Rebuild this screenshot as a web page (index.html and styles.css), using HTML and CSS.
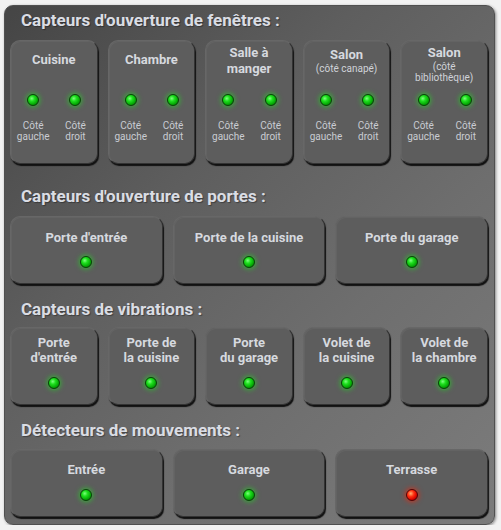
FILE: index.html
```html
<!DOCTYPE html>
<html lang="fr">
<head>
<meta charset="utf-8">
<link rel="stylesheet" href="styles.css">
</head>
<body>
<div class="panel">
  <section class="section first">
    <h2 class="title">Capteurs d'ouverture de fenêtres :</h2>
    <div class="grid five">
      <div class="card win">
        <div class="wtitle"><span class="name">Cuisine</span></div>
        <div class="pair">
          <div class="side"><span class="led green"></span><span class="lbl">Côté<br>gauche</span></div>
          <div class="side"><span class="led green"></span><span class="lbl">Côté<br>droit</span></div>
        </div>
      </div>
      <div class="card win">
        <div class="wtitle"><span class="name">Chambre</span></div>
        <div class="pair">
          <div class="side"><span class="led green"></span><span class="lbl">Côté<br>gauche</span></div>
          <div class="side"><span class="led green"></span><span class="lbl">Côté<br>droit</span></div>
        </div>
      </div>
      <div class="card win">
        <div class="wtitle"><span class="name">Salle à<br>manger</span></div>
        <div class="pair">
          <div class="side"><span class="led green"></span><span class="lbl">Côté<br>gauche</span></div>
          <div class="side"><span class="led green"></span><span class="lbl">Côté<br>droit</span></div>
        </div>
      </div>
      <div class="card win">
        <div class="wtitle"><span class="name">Salon</span><span class="sub">(côté canapé)</span></div>
        <div class="pair">
          <div class="side"><span class="led green"></span><span class="lbl">Côté<br>gauche</span></div>
          <div class="side"><span class="led green"></span><span class="lbl">Côté<br>droit</span></div>
        </div>
      </div>
      <div class="card win">
        <div class="wtitle"><span class="name">Salon</span><span class="sub">(côté<br>bibliothèque)</span></div>
        <div class="pair">
          <div class="side"><span class="led green"></span><span class="lbl">Côté<br>gauche</span></div>
          <div class="side"><span class="led green"></span><span class="lbl">Côté<br>droit</span></div>
        </div>
      </div>
    </div>
  </section>

  <section class="section second">
    <h2 class="title">Capteurs d'ouverture de portes :</h2>
    <div class="grid three">
      <div class="card door"><span class="name">Porte d'entrée</span><span class="led green"></span></div>
      <div class="card door"><span class="name">Porte de la cuisine</span><span class="led green"></span></div>
      <div class="card door"><span class="name">Porte du garage</span><span class="led green"></span></div>
    </div>
  </section>

  <section class="section third">
    <h2 class="title">Capteurs de vibrations :</h2>
    <div class="grid five">
      <div class="card vib"><span class="name">Porte<br>d'entrée</span><span class="led green"></span></div>
      <div class="card vib"><span class="name">Porte de<br>la cuisine</span><span class="led green"></span></div>
      <div class="card vib"><span class="name">Porte<br>du garage</span><span class="led green"></span></div>
      <div class="card vib"><span class="name">Volet de<br>la cuisine</span><span class="led green"></span></div>
      <div class="card vib"><span class="name">Volet de<br>la chambre</span><span class="led green"></span></div>
    </div>
  </section>

  <section class="section fourth">
    <h2 class="title">Détecteurs de mouvements :</h2>
    <div class="grid three">
      <div class="card motion"><span class="name">Entrée</span><span class="led green"></span></div>
      <div class="card motion"><span class="name">Garage</span><span class="led green"></span></div>
      <div class="card motion"><span class="name">Terrasse</span><span class="led red"></span></div>
    </div>
  </section>
</div>
</body>
</html>
```

FILE: styles.css
```css
html, body {
  margin: 0;
  padding: 0;
  background: #f2f2f2;
}
body {
  font-family: Roboto, "Liberation Sans", Arial, sans-serif;
}
.panel {
  box-sizing: border-box;
  width: 491px;
  margin: 5px 0 0 4px;
  padding: 4px 6px 7px 5px;
  border: 1px solid #505050;
  border-radius: 9px;
  background: linear-gradient(135deg, #454545 0%, #5e5e5e 35%, #6e6e6e 65%, #7c7c7c 100%);
  box-shadow: 1px 1px 3px rgba(0, 0, 0, 0.45);
}
.section.second { margin-top: 22px; }
.section.third { margin-top: 15px; }
.section.fourth { margin-top: 15px; }
.title {
  margin: 0 0 10px 11px;
  font-size: 17px;
  line-height: 20px;
  font-weight: 700;
  color: #dadde4;
  text-shadow: 1px 1px 1px rgba(0, 0, 0, 0.35);
}
.third .title { margin-bottom: 8px; }
.fourth .title { margin-bottom: 9px; }
.grid {
  display: grid;
  column-gap: 10px;
}
.grid.five { grid-template-columns: repeat(5, 1fr); }
.grid.three { grid-template-columns: repeat(3, 1fr); }
.card {
  box-sizing: border-box;
  background: #5d5d5d;
  border-radius: 10px;
  border: 1px solid #676767;
  border-right-color: #333;
  border-bottom-color: #333;
  box-shadow: 1px 2px 1px #111, inset 1px 1px 0 rgba(255, 255, 255, 0.04);
  color: #d6d9df;
  text-align: center;
  display: flex;
  flex-direction: column;
  align-items: center;
}
.name {
  font-weight: 700;
  font-size: 13px;
  line-height: 16px;
}
.card.win {
  height: 124px;
}
.wtitle {
  margin-top: 4px;
  height: 30px;
  display: flex;
  flex-direction: column;
  justify-content: safe center;
  align-items: center;
}
.sub {
  display: block;
  font-size: 10px;
  line-height: 11px;
  color: #cfd2d8;
}
.pair {
  align-self: stretch;
  display: grid;
  grid-template-columns: 1fr 1fr;
  padding: 0 0 0 1px;
  margin-top: 19px;
}
.side {
  display: flex;
  flex-direction: column;
  align-items: center;
}
.lbl {
  margin-top: 14px;
  font-size: 10px;
  line-height: 11px;
  color: #c9ccd2;
}
.led {
  display: block;
  box-sizing: border-box;
  width: 12px;
  height: 12px;
  border-radius: 50%;
}
.led.green {
  background: radial-gradient(circle at 38% 35%, #7dff7d 0%, #1ee01e 30%, #06a806 65%, #035a03 100%);
  border: 1px solid #034a03;
  box-shadow: 0 0 5px 1px rgba(30, 230, 30, 0.6);
}
.led.red {
  background: radial-gradient(circle at 38% 35%, #ffb070 0%, #ff3010 35%, #d00000 70%, #700000 100%);
  border: 1px solid #5a0000;
  box-shadow: 0 0 5px 1px rgba(255, 30, 0, 0.65);
}
.card.door {
  height: 68px;
  padding-top: 13px;
}
.card.door .led { margin-top: 10px; }
.card.vib {
  height: 78px;
  padding-top: 7px;
}
.card.vib .name { line-height: 15px; }
.card.vib .led { margin-top: 12px; }
.card.motion {
  height: 68px;
  padding-top: 12px;
}
.card.motion .led { margin-top: 11px; }
```
